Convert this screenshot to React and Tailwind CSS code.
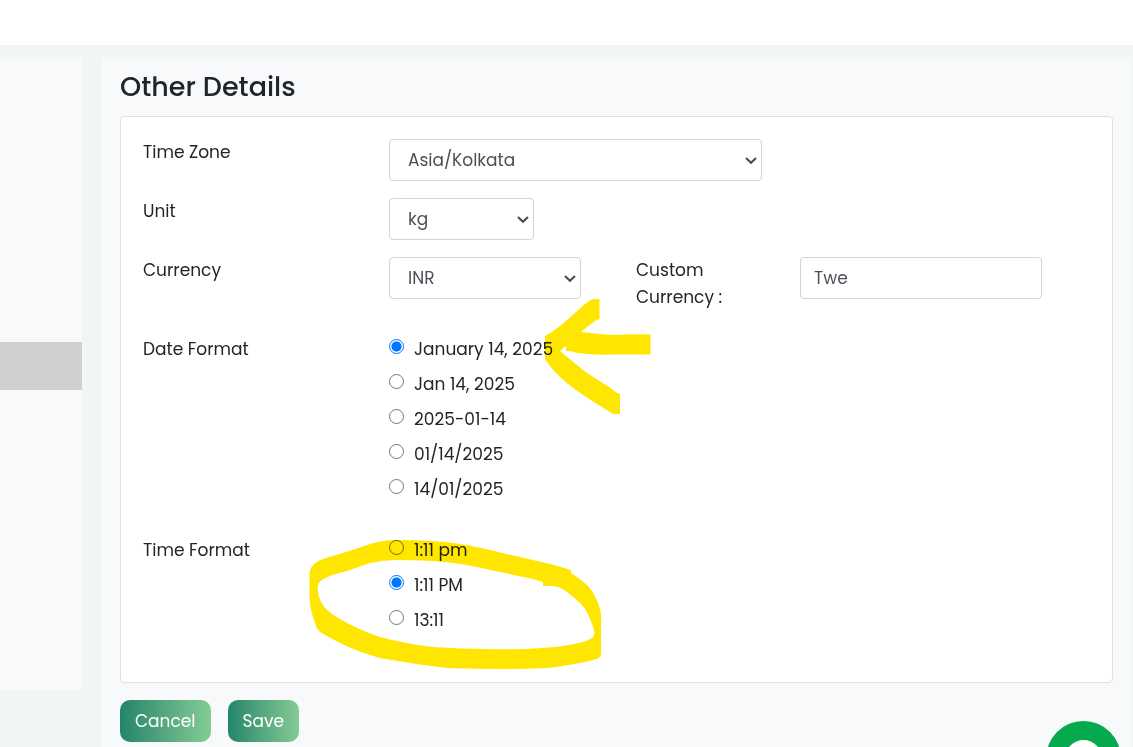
import { useState } from "react";

const dateFormats = [
  "January 14, 2025",
  "Jan 14, 2025",
  "2025-01-14",
  "01/14/2025",
  "14/01/2025",
];

const timeFormats = ["1:11 pm", "1:11 PM", "13:11"];

const controlClass =
  "h-[42px] w-full rounded border border-[#ced4da] bg-white text-[#495057]";

const buttonClass =
  "h-[42px] rounded-[10px] bg-linear-to-r from-[#20856a] to-[#84cc95] px-[15px] text-white";

function Select({ id, options }) {
  return (
    <div className="relative">
      <select
        id={id}
        className={`${controlClass} appearance-none pr-6 pl-[18px]`}
      >
        {options.map((option) => (
          <option key={option}>{option}</option>
        ))}
      </select>
      <svg
        viewBox="0 0 12 8"
        fill="none"
        stroke="#495057"
        strokeWidth="2.2"
        aria-hidden="true"
        className="pointer-events-none absolute top-[18px] right-[5px] h-2 w-3"
      >
        <path d="M1 1L6 5.8L11 1" />
      </svg>
    </div>
  );
}

function RadioGroup({ legend, name, options, initial }) {
  const [value, setValue] = useState(initial);

  return (
    <div
      role="radiogroup"
      aria-labelledby={`${name}-label`}
      className="grid grid-cols-[246fr_701fr]"
    >
      <span id={`${name}-label`}>{legend}</span>
      <div className="flex flex-col items-start gap-2">
        {options.map((option) => (
          <label key={option} className="flex items-start gap-[10px]">
            <input
              type="radio"
              name={name}
              value={option}
              checked={value === option}
              onChange={() => setValue(option)}
              className="mt-[3px] h-[15px] w-[15px] appearance-none rounded-full border border-[#767676] bg-white checked:border-[#0075ff] checked:bg-[radial-gradient(closest-side,#0075ff_72%,#ffffff_84%)]"
            />
            {option}
          </label>
        ))}
      </div>
    </div>
  );
}

// Yellow marker strokes drawn over the form
function Highlights() {
  return (
    <svg
      viewBox="121 117 560 560"
      width="560"
      height="560"
      fill="#ffe600"
      aria-hidden="true"
      className="pointer-events-none absolute top-0 left-0 mix-blend-multiply"
    >
      <path d="M599.5 299H593Q588 301 585 304L567 320Q556 330 545 336V359Q549 366 560 377C572 389 596 403 610 412Q612 414 614 414H620V394L617 393C609 386 599 381 587 373Q573 362 560 351L566 346V351H570Q578 354 587 354Q600 355 613 354.5H650.5V334.5Q630 334 613 335Q597 334 581 332Q588 326 595 321L599.5 319Z" />
      <path
        fillRule="evenodd"
        d="M309.5 573C310 564 320 559 333 556Q350 551 367 545Q382 540 397 540Q415 540 433 541Q450 542 467 545Q487 549 507 554L533 560Q552 564 571 570V573Q579 578 587 585C594 592 598 602 600 609Q601 612 601 617V653Q601 657 597 659C585 662 566 666 547 668Q524 669 500 669Q474 669 447 668Q413 664 380 658C358 652 338 643 320 632Q316 628 315 623Q310 610 309.5 597ZM317.5 587Q318 583 322 580C328 576 338 573 347 571L370 563Q383 560 397 560Q415 560 433 561Q450 562 467 565L500 572L533 579L543 582V586H552Q559 586 567 592Q576 599 582 605C588 612 591 621 593 627Q595 632 594 635Q593 639 583 642Q563 647 543 648Q515 650 487 649Q460 649 433 647Q406 644 380 637Q359 630 340 619Q331 614 325 608Q321 603 319 597Q318 592 317.5 587Z"
      />
    </svg>
  );
}

function App() {
  return (
    <div className="flex min-h-screen flex-col bg-[#f1f5f6] font-[Poppins,Inter,sans-serif] text-[17px] leading-[27px] text-[#212529]">
      <header className="h-[45px] bg-white" />

      <div className="mt-3 flex flex-1">
        <aside className="mb-[57px] w-[82px] shrink-0 bg-[#f8f9fb] pt-[285px]">
          <div className="h-12 bg-[#d1cfd0]" />
        </aside>

        <main className="mr-px ml-[19px] flex-1 bg-[#f8f9fb] px-[19px] pt-3 pb-[5px]">
          <h1 className="text-[27px] leading-9 font-medium">Other Details</h1>

          <form onSubmit={(e) => e.preventDefault()}>
            <div className="relative mt-[11px] rounded border border-[#dfdfdf] bg-white px-[22px] pt-[22px] pb-[48px]">
              <div className="grid grid-cols-[246fr_373fr_328fr]">
                <label htmlFor="timezone">Time Zone</label>
                <Select id="timezone" options={["Asia/Kolkata"]} />
              </div>

              <div className="mt-[17px] grid grid-cols-[246fr_145fr_556fr]">
                <label htmlFor="unit">Unit</label>
                <Select id="unit" options={["kg"]} />
              </div>

              <div className="mt-[17px] grid grid-cols-[246fr_192fr_55fr_122fr_42fr_242fr_48fr]">
                <label htmlFor="currency">Currency</label>
                <Select id="currency" options={["INR"]} />
                <label htmlFor="custom-currency" className="col-start-4">
                  Custom Currency :
                </label>
                <input
                  id="custom-currency"
                  type="text"
                  defaultValue="Twe"
                  className={`${controlClass} col-start-6 px-[13px]`}
                />
              </div>

              <div className="mt-[25px]">
                <RadioGroup
                  legend="Date Format"
                  name="date-format"
                  options={dateFormats}
                  initial="January 14, 2025"
                />
              </div>

              <div className="mt-[34px]">
                <RadioGroup
                  legend="Time Format"
                  name="time-format"
                  options={timeFormats}
                  initial="1:11 PM"
                />
              </div>

              <Highlights />
            </div>

            <div className="mt-[17px] flex gap-[17px]">
              <button type="button" className={buttonClass}>
                Cancel
              </button>
              <button type="submit" className={buttonClass}>
                Save
              </button>
            </div>
          </form>
        </main>
      </div>

      <button
        type="button"
        aria-label="Chat"
        className="fixed right-3 -bottom-[49px] flex h-[75px] w-[75px] items-center justify-center rounded-full bg-[#05a94e]"
      >
        <span className="h-[37px] w-[37px] rounded-full bg-white" />
      </button>
    </div>
  );
}

export default App;
